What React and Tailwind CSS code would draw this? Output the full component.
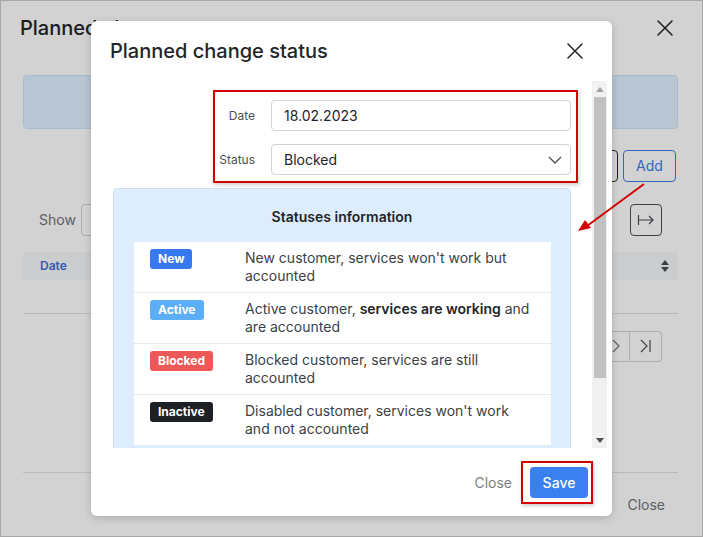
import React from 'react';

const statuses = [
  { name: 'New', color: 'bg-[#3779ee]', text: <>New customer, services won't work but accounted</> },
  { name: 'Active', color: 'bg-[#5caff7]', text: <>Active customer, <strong className="font-semibold text-[#212529]">services are working</strong> and are accounted</> },
  { name: 'Blocked', color: 'bg-[#ec5757]', text: <>Blocked customer, services are still accounted</> },
  { name: 'Inactive', color: 'bg-[#1d2126]', text: <>Disabled customer, services won't work and not accounted</> },
];

function CloseIcon({ className }) {
  return (
    <svg className={className} viewBox="0 0 16 16" fill="none" stroke="currentColor" strokeWidth="1.5" strokeLinecap="round">
      <path d="M1 1l14 14M15 1L1 15" />
    </svg>
  );
}

function BackgroundPage() {
  return (
    <div className="flex flex-col h-full">
      {/* Header */}
      <div className="h-[54px] flex items-center justify-between pl-[19px] pr-[29px]">
        <h2 className="text-[20px] font-medium text-[#212529]">Planned change status</h2>
        <CloseIcon className="w-[16px] h-[16px] text-[#212529]" />
      </div>

      <div className="ml-[22px] mr-[24px] mt-[21px] h-[54px] rounded-[4px] bg-[#e0f0ff] border border-[#cfe3f8]"></div>

      <div className="ml-[22px] mr-[24px] mt-[21px] flex justify-end gap-[5px] pr-[2px]">
        <div className="h-[32px] w-[60px] rounded-[4px] border border-[#212529]"></div>
        <div className="h-[32px] w-[53px] rounded-[4px] border border-[#3b7ee8] text-[#3b7ee8] text-[14px] flex items-center justify-center">Add</div>
      </div>

      <div className="ml-[22px] mr-[24px] mt-[22px] h-[32px] flex items-center justify-between pl-[16px] pr-[16px]">
        <div className="flex items-center gap-[5px]">
          <span className="text-[14px] text-[#6c757d]">Show</span>
          <div className="h-[32px] w-[60px] rounded-[4px] border border-[#ced4da]"></div>
        </div>
        <div className="h-[32px] w-[32px] rounded-[4px] border border-[#495057] flex items-center justify-center">
          <svg className="w-[18px] h-[12px] text-[#495057]" viewBox="0 0 18 12" fill="none" stroke="currentColor" strokeWidth="1.2">
            <path d="M1.5 1v10M2 6h14M12 2l4 4-4 4" />
          </svg>
        </div>
      </div>

      <div className="ml-[22px] mr-[24px] mt-[16px] h-[29px] bg-[#f7f8f9] flex items-center justify-between pl-[17px] pr-[9px]">
        <span className="text-[12px] font-semibold text-[#3f6fd6]">Date</span>
        <svg className="w-[8px] h-[12px] text-[#495057]" viewBox="0 0 8 12" fill="currentColor">
          <path d="M4 0l4 5H0zM4 12l4-5H0z" />
        </svg>
      </div>
      <div className="ml-[22px] mr-[24px] h-[34px] border-b border-[#dee2e6]"></div>

      <div className="ml-[22px] mr-[24px] mt-[17px] flex justify-end pr-[16px]">
        <div className="h-[31px] w-[29px] border border-[#ced4da] rounded-l-[4px] flex items-center justify-center text-[#6c757d]">
          <svg className="w-[8px] h-[14px]" viewBox="0 0 8 14" fill="none" stroke="currentColor" strokeWidth="1.2"><path d="M1 1l6 6-6 6" /></svg>
        </div>
        <div className="h-[31px] w-[32px] border border-l-0 border-[#ced4da] rounded-r-[4px] flex items-center justify-center text-[#495057]">
          <svg className="w-[12px] h-[14px]" viewBox="0 0 12 14" fill="none" stroke="currentColor" strokeWidth="1.2"><path d="M1 1l6 6-6 6M10 1v12" /></svg>
        </div>
      </div>

      <div className="ml-[22px] mr-[24px] mt-[110px] border-t border-[#dee2e6]"></div>
      <div className="ml-[22px] mr-[24px] h-[64px] flex items-center justify-end pr-[13px]">
        <span className="text-[14px] text-[#6c757d]">Close</span>
      </div>
    </div>
  );
}

function StatusesInfo() {
  return (
    <div className="mt-[13px] rounded-[4px] bg-[#deedfd] border border-[#cde1f6] pb-[20px]">
      <div className="pt-[18px] pb-[15px] text-center text-[14px] font-semibold leading-[20px] text-[#212529]">
        Statuses information
      </div>
      <div className="ml-[20px] mr-[19px] bg-white">
        {statuses.map((s, i) => (
          <div key={s.name} className={`flex py-[7px] pl-[16px] pr-[19px] ${i > 0 ? 'border-t border-[#e7e9ec]' : ''}`}>
            <div className="w-[95px] shrink-0 flex items-start">
              <span className={`flex h-[20px] items-center px-[8px] rounded-[3px] text-[12px] font-bold text-white ${s.color}`}>
                {s.name}
              </span>
            </div>
            <p className="text-[14px] leading-[18px] text-[#3a3f47]">{s.text}</p>
          </div>
        ))}
      </div>
    </div>
  );
}

function Modal() {
  return (
    <div className="absolute left-[90px] top-[20px] w-[521px] h-[495px] bg-white rounded-[6px] shadow-[0_2px_8px_rgba(0,0,0,0.18)] flex flex-col">
      {/* Header */}
      <div className="h-[60px] flex items-center justify-between pl-[19px] pr-[29px] shrink-0">
        <h1 className="text-[20px] font-medium text-[#212529]">Planned change status</h1>
        <CloseIcon className="w-[16px] h-[16px] text-[#212529]" />
      </div>

      {/* Body with scrollbar */}
      <div className="h-[367px] flex shrink-0">
        <div className="flex-1 overflow-hidden pl-[22px] pr-[21px]">
          <div className="relative pt-[19px]">
            <div className="flex flex-col gap-[13px]">
              <div className="flex items-center">
                <label className="w-[158px] shrink-0 pr-[16px] text-right text-[12px] text-[#495057]">Date</label>
                <div className="flex-1 h-[31px] rounded-[4px] border border-[#ced4da] flex items-center px-[12px] text-[14px] text-[#212529]">
                  18.02.2023
                </div>
              </div>
              <div className="flex items-center">
                <label className="w-[158px] shrink-0 pr-[16px] text-right text-[12px] text-[#495057]">Status</label>
                <div className="flex-1 h-[31px] rounded-[4px] border border-[#ced4da] flex items-center justify-between pl-[12px] pr-[8px] text-[14px] text-[#212529]">
                  <span>Blocked</span>
                  <svg className="w-[14px] h-[8px] text-[#495057]" viewBox="0 0 14 8" fill="none" stroke="currentColor" strokeWidth="1.3">
                    <path d="M1 1l6 6 6-6" />
                  </svg>
                </div>
              </div>
            </div>
            {/* annotation frame */}
            <div className="absolute left-[100px] right-[-7px] top-[9px] h-[93px] border-2 border-[#d40000] shadow-[1px_2px_4px_rgba(0,0,0,0.2)] pointer-events-none"></div>
          </div>
          <StatusesInfo />
        </div>
        {/* scrollbar */}
        <div className="w-[15px] mr-[5px] bg-[#f1f1f1] flex flex-col items-center">
          <div className="h-[16px] flex items-center justify-center">
            <svg className="w-[8px] h-[5px] text-[#a3a3a3]" viewBox="0 0 8 5" fill="currentColor"><path d="M4 0l4 5H0z" /></svg>
          </div>
          <div className="w-[12px] h-[281px] bg-[#c1c1c1]"></div>
          <div className="flex-1"></div>
          <div className="h-[16px] flex items-center justify-center">
            <svg className="w-[8px] h-[5px] text-[#505050]" viewBox="0 0 8 5" fill="currentColor"><path d="M0 0h8L4 5z" /></svg>
          </div>
        </div>
      </div>

      {/* Footer */}
      <div className="flex-1 flex items-center justify-end gap-[18px] pr-[24px]">
        <button className="text-[14px] text-[#7a7f85]">Close</button>
        <div className="relative">
          <button className="h-[31px] w-[58px] rounded-[4px] bg-[#3b80f0] text-white text-[14px] font-medium">Save</button>
          <div className="absolute left-[-9px] right-[-5px] top-[-6px] bottom-[-6px] border-2 border-[#d40000] shadow-[1px_2px_4px_rgba(0,0,0,0.2)] pointer-events-none"></div>
        </div>
      </div>
    </div>
  );
}

export default function App() {
  return (
    <div className="w-[703px] h-[537px] relative overflow-hidden border border-[#a8a8a8] bg-white font-['Inter',sans-serif]">
      <BackgroundPage />
      <div className="absolute inset-0 bg-[rgba(0,0,0,0.176)]"></div>
      <Modal />
      {/* annotation arrow */}
      <svg className="absolute left-0 top-0 w-[701px] h-[535px] pointer-events-none" viewBox="0 0 701 535">
        <line x1="643" y1="183" x2="586" y2="225" stroke="#d40000" strokeWidth="2" />
        <path d="M577 230l7-11 6 8z" fill="#d40000" />
      </svg>
    </div>
  );
}
